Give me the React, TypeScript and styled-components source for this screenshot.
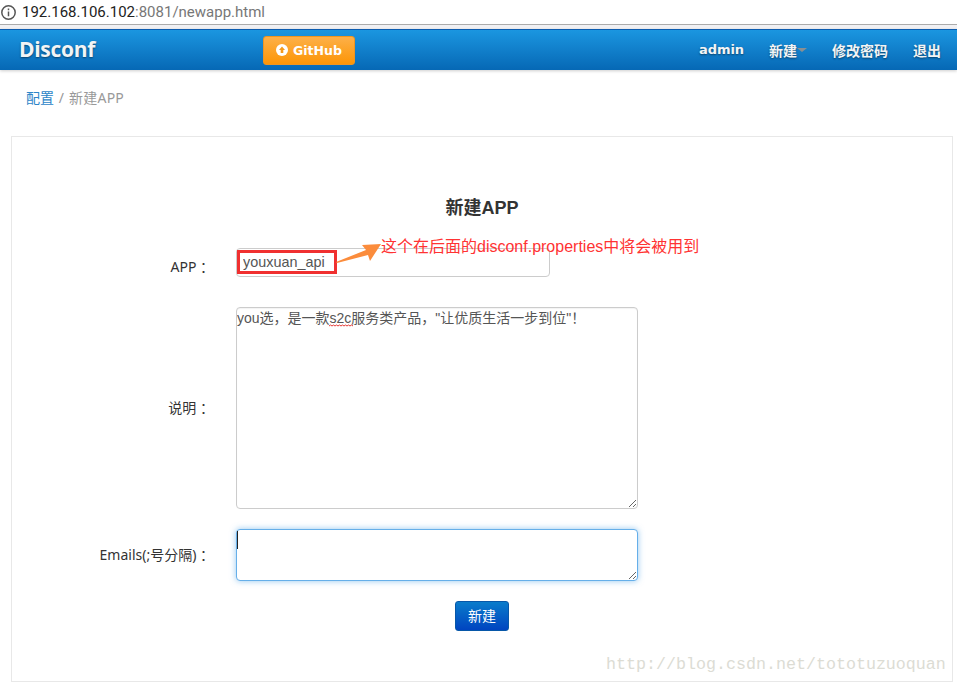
import React from "react";
import styled, { createGlobalStyle } from "styled-components";

const Global = createGlobalStyle`
  html, body { margin: 0; padding: 0; background: #fff; }
  body { font-family: "Liberation Sans", "Noto Sans CJK SC", sans-serif; font-size: 13px; color: #333; overflow: hidden; }
`;
const Page = styled.div`
  width: 957px; height: 684px; position: relative; overflow: hidden; background: #fff;
`;
const AddressBar = styled.div`
  height: 24px; display: flex; align-items: center; gap: 5px; padding: 0 0 0 0;
  border-bottom: 1px solid #ababab; box-sizing: content-box; background: #fff;
`;
const Url = styled.div`
  font-size: 15px; color: #777; white-space: nowrap; font-family: "Roboto", "Liberation Sans", sans-serif;
  b { font-weight: 400; color: #222; }
`;
const TabStrip = styled.div`height: 4px; background: #f1f1f4;`;
const Navbar = styled.header`
  height: 41px; box-sizing: border-box; display: flex; align-items: center; padding: 0 16px 0 19px;
  background: linear-gradient(#1b96e0, #0668b5); border-top: 1px solid #0b5cb0;
  box-shadow: 0 1px 3px rgba(0,0,0,.2); color: #f2f4f5; font-weight: 700;
  text-shadow: 0 1px 2px rgba(0,0,0,.45);
`;
const Brand = styled.div`font-family: "Open Sans", sans-serif; font-size: 21px; font-weight: 700; letter-spacing: -.3px; width: 244px; padding-bottom: 3px;`;
const GitHubButton = styled.div`
  width: 92px; height: 29px; box-sizing: border-box; display: flex; align-items: center; justify-content: center; gap: 5px;
  border-radius: 3px; border: 1px solid #ee9520; background: linear-gradient(#fdb048, #fc9506);
  font-family: "DejaVu Sans", sans-serif; font-size: 12.5px; text-shadow: none; color: #fff;
`;
const NavLinks = styled.nav`margin-left: auto; display: flex; align-items: center; gap: 25px; font-size: 14px; padding-bottom: 1px;`;
const NavAdmin = styled.span`font-family: "DejaVu Sans", sans-serif; font-size: 13px; letter-spacing: -.05px;`;
const NavDrop = styled.span`
  display: flex; align-items: center;
  &::after { content: ""; border: 5px solid transparent; border-top: 4px solid #8a8f92; border-bottom: 0; }
`;
const Crumbs = styled.div`
  height: 66px; box-sizing: border-box; padding: 19px 0 0 26px; color: #999; font-size: 14px; line-height: 18px;
  font-family: "Noto Sans", "Noto Sans CJK SC", sans-serif; word-spacing: 1px; letter-spacing: .2px;
  a { color: #2d85c8; text-decoration: none; letter-spacing: 0; }
`;
const Card = styled.main`
  margin: 0 4px 0 11px; height: 546px; box-sizing: border-box; border: 1px solid #e8e8e8; padding-top: 59px;
`;
const Title = styled.h2`
  margin: 0 0 28px; text-align: center; font-size: 18px; line-height: 24px; font-weight: 700; color: #333;
`;
const Row = styled.div<{ $mb: number }>`
  display: grid; grid-template-columns: 202px 1fr; column-gap: 22px; align-items: center; margin-bottom: ${(p) => p.$mb}px;
`;
const Label = styled.label<{ $top?: number }>`
  text-align: right; font-size: 14px; color: #333; padding-top: ${(p) => p.$top ?? 0}px; padding-bottom: ${(p) => (p.$top ? 0 : 3)}px; white-space: nowrap;
  font-family: "Noto Sans", "Noto Sans CJK SC", sans-serif;
`;
const TextInput = styled.input`
  width: 314px; height: 29px; box-sizing: border-box; border: 1px solid #ccc; border-radius: 4px; outline: 0;
  padding: 0 6px 2px; font: 14.4px "Liberation Sans", sans-serif; color: #555; margin: 0;
`;
const Area = styled.textarea<{ $focus?: boolean; $h: number }>`
  display: block; width: 402px; height: ${(p) => p.$h}px; box-sizing: border-box; border-radius: 4px; outline: 0; padding: 0;
  font: 14px "Liberation Sans", "Noto Sans CJK SC", sans-serif; color: #555; line-height: 20px; margin: 0;
  border: 1px solid ${(p) => (p.$focus ? "#66afe9" : "#ccc")};
  box-shadow: ${(p) => (p.$focus ? "0 0 6px rgba(102,175,233,.7)" : "inset 0 1px 1px rgba(0,0,0,.05)")};
`;
const FieldWrap = styled.div`position: relative; width: max-content;`;
const Caret = styled.i`position: absolute; left: 1px; top: 2px; width: 1px; height: 18px; background: #222;`;
const Squiggle = styled.svg`position: absolute; left: 93px; top: 17px;`;
const Actions = styled.div`display: flex; justify-content: center;`;
const Submit = styled.button`
  width: 54px; height: 30px; border-radius: 3px; border: 1px solid #0757a8;
  background: linear-gradient(#0a7ccb, #0044c0); color: #fff; font: 14px "Noto Sans CJK SC", sans-serif; padding: 0 0 2px;
`;
const RedBox = styled.div`
  position: absolute; left: 237px; top: 250px; width: 100px; height: 24px; box-sizing: border-box; border: 3px solid #f03030;
`;
const Note = styled.div`
  position: absolute; left: 381px; top: 237px; color: #ff3333; font-size: 16px; line-height: 20px; white-space: nowrap;
  font-family: "Liberation Sans", "Noto Sans CJK SC", sans-serif;
`;
const Arrow = styled.svg`position: absolute; left: 335px; top: 242px;`;
const Watermark = styled.div`
  position: absolute; left: 606px; top: 655px; font: 16.67px "Liberation Mono", "DejaVu Sans Mono", monospace;
  color: #dcdcd4; white-space: nowrap;
`;

export default function App() {
  return (
    <Page>
      <Global />
      <AddressBar>
        <svg width="17" height="17" viewBox="0 0 16 16" fill="none" stroke="#555" strokeWidth="1.4">
          <circle cx="8" cy="8" r="6.3" />
          <path d="M8 7v4.5M8 4.2v1.6" />
        </svg>
        <Url><b>192.168.106.102</b>:8081/newapp.html</Url>
      </AddressBar>
      <TabStrip />
      <Navbar>
        <Brand>Disconf</Brand>
        <GitHubButton>
          <svg width="12" height="12" viewBox="0 0 12 12">
            <circle cx="6" cy="6" r="6" fill="#fff" />
            <path d="M6 2.4 9 6H7.3v3H4.7V6H3z" fill="#f59a1c" />
          </svg>
          GitHub
        </GitHubButton>
        <NavLinks>
          <NavAdmin>admin</NavAdmin>
          <NavDrop>新建</NavDrop>
          <span>修改密码</span>
          <span>退出</span>
        </NavLinks>
      </Navbar>
      <Crumbs><a href="#a">配置</a> / 新建APP</Crumbs>
      <Card>
        <Title>新建APP</Title>
        <Row $mb={30}>
          <Label $top={6}>APP ：</Label>
          <TextInput defaultValue="youxuan_api" />
        </Row>
        <Row $mb={20}>
          <Label>说明 ：</Label>
          <FieldWrap>
            <Area $h={202} defaultValue={'you选，是一款s2c服务类产品，"让优质生活一步到位"！'} />
            <Squiggle width="24" height="3" viewBox="0 0 24 3">
              <path d="M0 2 1.5 1 3 2 4.5 1 6 2 7.5 1 9 2 10.5 1 12 2 13.5 1 15 2 16.5 1 18 2 19.5 1 21 2 22.5 1 24 2" fill="none" stroke="#e53935" strokeWidth="1" />
            </Squiggle>
          </FieldWrap>
        </Row>
        <Row $mb={20}>
          <Label>Emails(;号分隔) ：</Label>
          <FieldWrap>
            <Area $h={52} $focus />
            <Caret />
          </FieldWrap>
        </Row>
        <Actions><Submit>新建</Submit></Actions>
      </Card>
      <RedBox />
      <Arrow width="48" height="24" viewBox="0 0 48 24">
        <path d="M1 20 31 8 27 3 46 2 35 19 33 13 2 21z" fill="#fb8c3c" />
      </Arrow>
      <Note>这个在后面的disconf.properties中将会被用到</Note>
      <Watermark>http://blog.csdn.net/tototuzuoquan</Watermark>
    </Page>
  );
}
